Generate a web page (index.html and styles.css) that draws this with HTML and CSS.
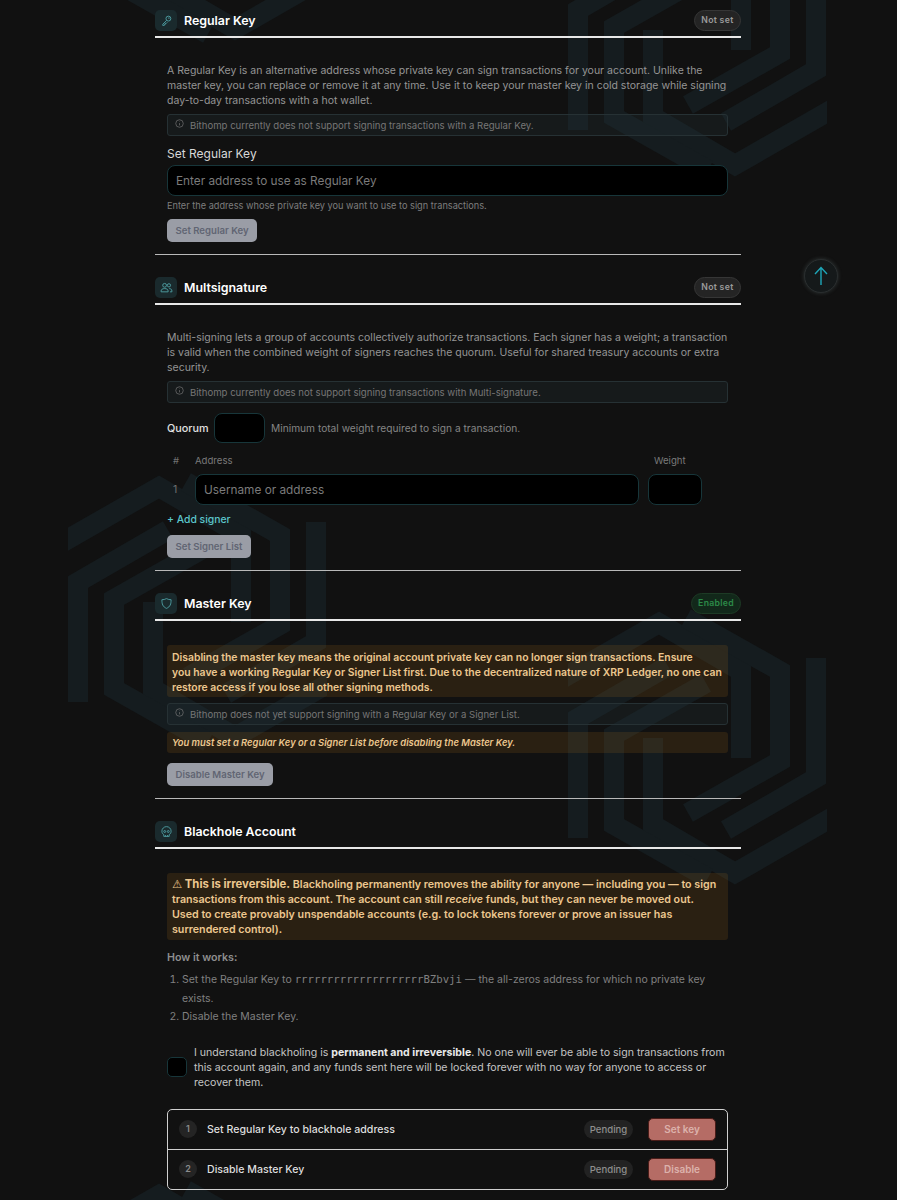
FILE: index.html
```html
<!DOCTYPE html>
<html lang="en">
<head>
  <meta charset="UTF-8">
  <meta name="viewport" content="width=device-width, initial-scale=1.0">
  <title>Account Control</title>
  <link rel="stylesheet" href="styles.css">
</head>
<body>

<!-- background watermark -->
<svg class="watermark" width="897" height="1200" viewBox="0 0 897 1200" aria-hidden="true">
  <defs>
    <clipPath id="hexClip"><rect x="0" y="-20" width="259" height="310"/></clipPath>
    <g id="hex" fill="none" stroke="#151c1f" stroke-width="20" stroke-linejoin="miter" clip-path="url(#hexClip)">
      <polyline points="270,201 167,260 85,212 85,125"/>
      <polyline points="-12,69 91,10 173,58 173,145"/>
      <polyline points="118,5 212,58 212,148 120,200"/>
      <polyline points="140,265 46,212 46,122 138,70"/>
      <polyline points="248,45 248,165 158,217"/>
      <polyline points="10,225 10,105 100,53"/>
    </g>
  </defs>
  <use href="#hex" x="68" y="-231"/>
  <use href="#hex" x="568" y="-95"/>
  <use href="#hex" x="68" y="477"/>
  <use href="#hex" x="568" y="613"/>
  <use href="#hex" x="68" y="1185"/>
</svg>

<main class="container">

  <!-- Regular key -->
  <section class="block">
    <div class="block-head">
      <span class="icon-box">
        <svg viewBox="0 0 24 24"><circle cx="15.5" cy="8.5" r="4.5"/><path d="M12.3 11.7 5 19v2h3v-2h2v-2h2l1.5-1.5"/><circle cx="16.5" cy="7.5" r=".6"/></svg>
      </span>
      <h2>Regular Key</h2>
      <span class="badge">Not set</span>
    </div>
    <div class="block-body">
      <p class="text">A Regular Key is an alternative address whose private key can sign transactions for your account. Unlike the master key, you can replace or remove it at any time. Use it to keep your master key in cold storage while signing day-to-day transactions with a hot wallet.</p>
      <div class="note">
        <svg viewBox="0 0 24 24"><circle cx="12" cy="12" r="10"/><path d="M12 11v6M12 7v1"/></svg>
        Bithomp currently does not support signing transactions with a Regular Key.
      </div>
      <label class="field-label">Set Regular Key</label>
      <input class="input input-wide" type="text" placeholder="Enter address to use as Regular Key">
      <div class="hint">Enter the address whose private key you want to use to sign transactions.</div>
      <button class="btn">Set Regular Key</button>
    </div>
  </section>

  <!-- Multisignature -->
  <section class="block">
    <div class="block-head">
      <span class="icon-box">
        <svg viewBox="0 0 24 24"><circle cx="8.5" cy="8" r="3.5"/><circle cx="16.5" cy="8" r="3"/><path d="M2 20v-1.500c0-3 2.500-4.500 6.500-4.500s6.500 1.500 6.500 4.500V20zM17 14c3 0 5 1.500 5 4.500V20h-3.500"/></svg>
      </span>
      <h2>Multsignature</h2>
      <span class="badge">Not set</span>
    </div>
    <div class="block-body">
      <p class="text">Multi-signing lets a group of accounts collectively authorize transactions. Each signer has a weight; a transaction is valid when the combined weight of signers reaches the quorum. Useful for shared treasury accounts or extra security.</p>
      <div class="note">
        <svg viewBox="0 0 24 24"><circle cx="12" cy="12" r="10"/><path d="M12 11v6M12 7v1"/></svg>
        Bithomp currently does not support signing transactions with Multi-signature.
      </div>
      <div class="quorum">
        <span class="quorum-label">Quorum</span>
        <input class="input input-quorum" type="text">
        <span class="quorum-text">Minimum total weight required to sign a transaction.</span>
      </div>
      <div class="signer-row signer-head">
        <span class="signer-num">#</span>
        <span class="signer-addr">Address</span>
        <span class="signer-weight">Weight</span>
      </div>
      <div class="signer-row">
        <span class="signer-num">1</span>
        <input class="input signer-addr" type="text" placeholder="Username or address">
        <input class="input signer-weight" type="text">
      </div>
      <div class="add-signer">+ Add signer</div>
      <button class="btn btn-signer">Set Signer List</button>
    </div>
  </section>

  <!-- Master key -->
  <section class="block">
    <div class="block-head">
      <span class="icon-box">
        <svg viewBox="0 0 24 24"><path d="M12 3c3 1.500 5.500 2 8.500 2 0 8-1.500 13-8.500 16C5 18 3.500 13 3.500 5c3 0 5.500-.5 8.500-2z"/></svg>
      </span>
      <h2>Master Key</h2>
      <span class="badge badge-on">Enabled</span>
    </div>
    <div class="block-body block-body-master">
      <div class="warn">Disabling the master key means the original account private key can no longer sign transactions. Ensure<br>you have a working Regular Key or Signer List first. Due to the decentralized nature of XRP Ledger, no one can restore access if you lose all other signing methods.</div>
      <div class="note note-tight">
        <svg viewBox="0 0 24 24"><circle cx="12" cy="12" r="10"/><path d="M12 11v6M12 7v1"/></svg>
        Bithomp does not yet support signing with a Regular Key or a Signer List.
      </div>
      <div class="warn warn-small">You must set a Regular Key or a Signer List before disabling the Master Key.</div>
      <button class="btn btn-master">Disable Master Key</button>
    </div>
  </section>

  <!-- Blackhole -->
  <section class="block block-last">
    <div class="block-head">
      <span class="icon-box">
        <svg viewBox="0 0 24 24"><path d="M12 3a8.500 8.500 0 0 0-8.500 8.500c0 3 1.500 5 3.500 6.300V21h10v-3.200c2-1.300 3.500-3.300 3.500-6.300A8.500 8.500 0 0 0 12 3z"/><circle cx="8.700" cy="12" r="1.800"/><circle cx="15.300" cy="12" r="1.800"/><path d="M10 21v-2.500M14 21v-2.500"/></svg>
      </span>
      <h2>Blackhole Account</h2>
    </div>
    <div class="block-body block-body-hole">
      <div class="warn warn-first"><strong><span class="warn-sign">⚠</span> This is irreversible.</strong> Blackholing permanently removes the ability for anyone — including you — to sign transactions from this account. The account can still <em>receive</em> funds, but they can never be moved out. Used to create provably unspendable accounts (e.g. to lock tokens forever or prove an issuer has surrendered control).</div>
      <div class="how">How it works:</div>
      <ol class="steps-text">
        <li>Set the Regular Key to <code>rrrrrrrrrrrrrrrrrrrrBZbvji</code> — the all-zeros address for which no private key exists.</li>
        <li>Disable the Master Key.</li>
      </ol>
      <div class="confirm">
        <input class="input check" type="text">
        <p>I understand blackholing is <strong>permanent and irreversible</strong>. No one will ever be able to sign transactions from this account again, and any funds sent here will be locked forever with no way for anyone to access or recover them.</p>
      </div>
      <div class="step-box">
        <div class="step">
          <span class="step-num">1</span>
          <span class="step-name">Set Regular Key to blackhole address</span>
          <span class="pending">Pending</span>
          <button class="btn-red">Set key</button>
        </div>
        <div class="step">
          <span class="step-num">2</span>
          <span class="step-name">Disable Master Key</span>
          <span class="pending">Pending</span>
          <button class="btn-red">Disable</button>
        </div>
      </div>
    </div>
  </section>

</main>

<!-- back to top -->
<button class="to-top" aria-label="Back to top">
  <svg viewBox="0 0 14 20" width="14" height="20"><path d="M7 19V1.500M1 8l6-6.500L13 8"/></svg>
</button>

</body>
</html>
```

FILE: styles.css
```css
body {
  margin: 0;
  height: 1200px;
  overflow: hidden;
  background-color: #111111;
  font-family: Inter, "Noto Sans", sans-serif;
  font-size: 10.5px;
  line-height: 15px;
  color: #fff;
}
.watermark {
  position: absolute;
  top: 0;
  left: 0;
}
.container {
  position: relative;
  width: 586px;
  margin-left: 155px;
  padding-top: 10px;
}
.block {
  border-bottom: 1.5px solid #b9b9b9;
  margin-bottom: 22px;
  padding-bottom: 12px;
}
.block-last {
  border-bottom: none;
}
.block-head {
  display: flex;
  align-items: center;
  gap: 7px;
  padding-bottom: 5px;
  border-bottom: 2px solid #e8e8e8;
}
.block-head h2 {
  flex: 1;
  margin: 0;
  font-size: 12.4px;
  font-weight: 600;
  line-height: 21px;
}
.icon-box {
  display: flex;
  align-items: center;
  justify-content: center;
  width: 22px;
  height: 21px;
  border-radius: 5px;
  background-color: #1a2a2d;
}
.icon-box svg {
  width: 13px;
  height: 13px;
  fill: none;
  stroke: #4f9fa3;
  stroke-width: 1.7;
}
.badge {
  padding: 0 6.5px;
  border: 1px solid #363636;
  border-radius: 11px;
  background-color: #242424;
  color: #9a9a9a;
  font-size: 8.7px;
  font-weight: 600;
  letter-spacing: .3px;
  line-height: 19px;
}
.badge-on {
  padding: 0 6px;
  border-color: #1d3a25;
  background-color: #12281a;
  color: #2c8a48;
}
.block-body {
  padding: 25px 13px 0 12px;
}
.block-body-master {
  padding-top: 24px;
}
.block-body-hole {
  padding-top: 24px;
}
.text {
  margin: 0 0 6px;
  color: #959595;
}
.note {
  display: flex;
  align-items: center;
  gap: 5px;
  height: 20px;
  padding-left: 7px;
  border: 1px solid #263134;
  border-radius: 3px;
  background-color: rgba(40, 60, 62, .22);
  color: #767676;
  font-size: 9.6px;
}
.note svg {
  width: 9px;
  height: 9px;
  margin-right: 1px;
  margin-top: -3px;
  fill: none;
  stroke: #777;
  stroke-width: 1.8;
}
.note-tight {
  margin-top: 6px;
}
.field-label {
  display: block;
  margin-top: 11px;
  margin-bottom: 4px;
  font-size: 12px;
  line-height: 14px;
  color: #d8d8d8;
}
.input {
  box-sizing: border-box;
  display: block;
  height: 31px;
  padding: 0 8px;
  border: 1px solid #17363a;
  border-radius: 8px;
  background-color: #000;
  color: #fff;
  font-family: inherit;
  font-size: 11.8px;
  outline: none;
}
.input::placeholder {
  color: #7b7b7b;
}
.input-wide {
  width: 100%;
}
.hint {
  margin-top: 4px;
  color: #7d7d7d;
  font-size: 9.2px;
  line-height: 12px;
}
.btn {
  display: block;
  height: 23px;
  margin-top: 7px;
  padding: 0 8.5px;
  border: none;
  border-radius: 5px;
  background-color: #9a9da6;
  color: #616573;
  font-family: inherit;
  font-size: 9.6px;
  font-weight: 600;
}
.btn-signer {
  margin-top: 8px;
}
.btn-master {
  margin-top: 10px;
}
.quorum {
  display: flex;
  align-items: center;
  margin-top: 10px;
}
.quorum-label {
  width: 47px;
  color: #e0e0e0;
  font-weight: 500;
  font-size: 10.8px;
}
.input-quorum {
  width: 51px;
  height: 30px;
  margin-right: 6px;
}
.quorum-text {
  color: #858585;
  font-size: 10.2px;
}
.signer-row {
  display: flex;
  align-items: center;
  gap: 9px;
}
.signer-head {
  margin-top: 12px;
  margin-bottom: 7px;
  color: #7a7a7a;
  font-size: 9.6px;
  line-height: 12px;
}
.signer-num {
  width: 19px;
  padding-left: 6px;
  box-sizing: border-box;
  color: #707070;
}
.signer-addr {
  width: 444px;
}
.signer-head .signer-addr {
  width: 450px;
}
.signer-weight {
  width: 54px;
}
.add-signer {
  margin-top: 7px;
  color: #5cc6cc;
  font-size: 10.4px;
  font-weight: 500;
}
.warn {
  padding: 5px 5px 2px;
  border-radius: 3px;
  background-color: rgba(190, 120, 30, .15);
  color: #ecc78f;
  font-size: 10.4px;
  font-weight: 600;
}
.warn-small {
  margin-top: 7px;
  padding: 3px 5px;
  font-size: 9.4px;
  font-style: italic;
}
.warn-first {
  padding: 4px 9px 3px 5px;
  font-size: 10.7px;
}
.warn strong {
  font-size: 11.3px;
  font-weight: 700;
}
.warn-sign {
  font-family: "DejaVu Sans", sans-serif;
  font-weight: 400;
}
.how {
  margin-top: 10px;
  color: #8e8e8e;
  font-size: 10.7px;
  font-weight: 600;
}
.steps-text {
  margin: 6px 0 0;
  padding-left: 15px;
  color: #808080;
  line-height: 18.5px;
}
.steps-text code {
  font-family: "DejaVu Sans Mono", monospace;
  font-size: 10.7px;
}
.confirm {
  display: flex;
  align-items: center;
  gap: 7px;
  margin-top: 18px;
}
.confirm p {
  margin: 0;
  color: #c4c4c4;
  font-size: 10.6px;
}
.confirm strong {
  color: #e8e8e8;
}
.check {
  flex: none;
  width: 20px;
  height: 20px;
  padding: 0;
  border-radius: 5px;
}
.step-box {
  margin-top: 19px;
  border: 1px solid #d0d0d0;
  border-radius: 5px;
}
.step {
  display: flex;
  align-items: center;
  height: 39px;
  padding: 0 11px;
}
.step + .step {
  border-top: 1px solid #d0d0d0;
}
.step-num {
  flex: none;
  width: 18px;
  height: 18px;
  margin-right: 10px;
  border-radius: 50%;
  background-color: #242424;
  color: #8c8c8c;
  font-size: 9px;
  font-weight: 600;
  line-height: 18px;
  text-align: center;
}
.step-name {
  flex: 1;
  color: #dedede;
  font-size: 10.6px;
  font-weight: 500;
}
.pending {
  width: 49px;
  margin-right: 15px;
  border-radius: 10px;
  background-color: #222;
  color: #8e8e8e;
  font-size: 9.6px;
  font-weight: 500;
  line-height: 19px;
  text-align: center;
}
.btn-red {
  width: 68px;
  height: 23px;
  border: 1px solid #4a1c18;
  border-radius: 5px;
  background-color: #b56c65;
  color: #dcb2ac;
  font-family: inherit;
  font-size: 10px;
  font-weight: 600;
}
.to-top {
  position: fixed;
  left: 804px;
  top: 259px;
  display: flex;
  align-items: center;
  justify-content: center;
  width: 34px;
  height: 34px;
  padding: 0;
  border: 1.5px solid #2a2e2f;
  border-radius: 50%;
  background-color: #15191a;
  box-shadow: 0 0 4px rgba(120, 140, 140, .3);
}
.to-top svg {
  fill: none;
  stroke: #1ea6b8;
  stroke-width: 1.4;
}
```
